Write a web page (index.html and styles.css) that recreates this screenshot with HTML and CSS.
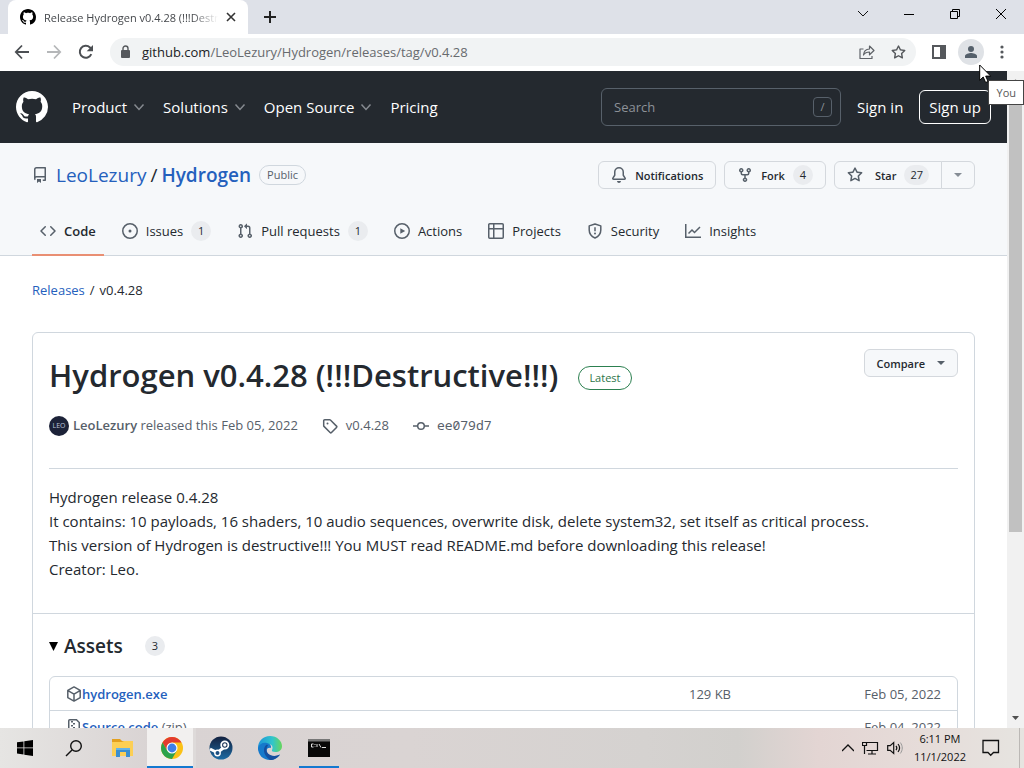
FILE: index.html
```html
<!DOCTYPE html>
<html lang="en">
<head>
    <meta charset="utf-8">
    <title>Release Hydrogen v0.4.28 (!!!Destructive!!!)</title>
    <link rel="stylesheet" href="styles.css">
</head>
<body>
<svg class="sprite" aria-hidden="true">
    <symbol id="mark" viewBox="0 0 16 16"><path d="M8 0C3.58 0 0 3.58 0 8c0 3.54 2.29 6.53 5.47 7.59.4.07.55-.17.55-.38 0-.19-.01-.82-.01-1.49-2.01.37-2.53-.49-2.69-.94-.09-.23-.48-.94-.82-1.13-.28-.15-.68-.52-.01-.53.63-.01 1.08.58 1.23.82.72 1.21 1.87.87 2.33.66.07-.52.28-.87.51-1.07-1.78-.2-3.64-.89-3.64-3.95 0-.87.31-1.59.82-2.15-.08-.2-.36-1.02.08-2.12 0 0 .67-.21 2.2.82.64-.18 1.32-.27 2-.27.68 0 1.36.09 2 .27 1.53-1.04 2.2-.82 2.2-.82.44 1.1.16 1.92.08 2.12.51.56.82 1.27.82 2.15 0 3.07-1.87 3.75-3.65 3.95.29.25.54.73.54 1.48 0 1.07-.01 1.93-.01 2.2 0 .21.15.46.55.38A8.013 8.013 0 0016 8c0-4.42-3.58-8-8-8z"/></symbol>
    <symbol id="chevron" viewBox="0 0 12 12"><path d="M1.500 3.500L6 8.500l4.500-5" fill="none" stroke="currentColor" stroke-width="1.500"/></symbol>
    <symbol id="star" viewBox="0 0 16 16"><path d="M8 .25a.75.75 0 01.673.418l1.882 3.815 4.21.612a.75.75 0 01.416 1.279l-3.046 2.97.719 4.192a.75.75 0 01-1.088.791L8 12.347l-3.766 1.98a.75.75 0 01-1.088-.79l.72-4.194L.818 6.374a.75.75 0 01.416-1.28l4.21-.611L7.327.668A.75.75 0 018 .25zm0 2.445L6.615 5.5a.75.75 0 01-.564.41l-3.097.45 2.24 2.184a.75.75 0 01.216.664l-.528 3.084 2.769-1.456a.75.75 0 01.698 0l2.77 1.456-.53-3.084a.75.75 0 01.216-.664l2.24-2.183-3.096-.45a.75.75 0 01-.564-.41L8 2.694v.001z"/></symbol>
</svg>

<div class="browser">
    <!-- tabs -->
    <div class="tabstrip">
        <div class="tab">
            <svg width="16" height="16"><use href="#mark"/></svg>
            <span class="tab-title">Release Hydrogen v0.4.28 (!!!Destructive!!!)</span>
            <button class="plain" aria-label="Close tab"><svg width="10" height="10" viewBox="0 0 10 10"><path d="M1 1l8 8M9 1L1 9" stroke="#333" stroke-width="1.600"/></svg></button>
        </div>
        <button class="plain newtab" aria-label="New tab"><svg width="12" height="12" viewBox="0 0 12 12"><path d="M6 0v12M0 6h12" stroke="#222" stroke-width="2"/></svg></button>
        <div class="winbuttons">
            <button class="plain" aria-label="Search tabs"><svg width="12" height="12" viewBox="0 0 12 12"><path d="M1 3l5 5 5-5" fill="none" stroke="#111"/></svg></button>
            <button class="plain" aria-label="Minimize"><svg width="12" height="12" viewBox="0 0 12 12"><path d="M1 6.500h10" stroke="#000"/></svg></button>
            <button class="plain" aria-label="Restore"><svg width="12" height="12" viewBox="0 0 12 12"><path d="M1.500 3.500h7v7h-7zM3.500 3.500v-2h7v7h-2" fill="none" stroke="#000"/></svg></button>
            <button class="plain" aria-label="Close"><svg width="12" height="12" viewBox="0 0 12 12"><path d="M1 1l10 10M11 1L1 11" stroke="#000"/></svg></button>
        </div>
    </div>

    <!-- toolbar -->
    <div class="toolbar">
        <button class="plain" aria-label="Back"><svg width="16" height="16" viewBox="0 0 16 16"><path d="M15 8H2M8 1.500L1.800 8 8 14.500" fill="none" stroke="#4c4f53" stroke-width="1.800"/></svg></button>
        <button class="plain" aria-label="Forward"><svg width="16" height="16" viewBox="0 0 16 16"><path d="M1 8h13M8 1.500L14.200 8 8 14.500" fill="none" stroke="#b5b7b9" stroke-width="1.800"/></svg></button>
        <button class="plain" aria-label="Reload"><svg width="16" height="16" viewBox="0 0 16 16"><path d="M13.300 10.200A6 6 0 1112 3.500l1.500 1.600" fill="none" stroke="#4c4f53" stroke-width="2"/><path d="M15 1v6.300H8.700z" fill="#4c4f53"/></svg></button>
        <div class="address">
            <svg width="10" height="14" viewBox="0 0 10 14"><rect x="1" y="5" width="9" height="8" rx="1" fill="#55585c"/><path d="M3 5.500V3.500a2.500 2.500 0 015 0v2" fill="none" stroke="#55585c" stroke-width="1.400"/></svg>
            <span class="url"><b>github.com</b>/LeoLezury/Hydrogen/releases/tag/v0.4.28</span>
            <button class="plain" aria-label="Share"><svg width="16" height="16" viewBox="0 0 16 16"><path d="M4.500 5H1v9.500h12V12M4.500 11c.3-4 2.500-5.800 6-6V2l4.500 4.500-4.500 4.300V8c-3 0-4.600.8-6 3z" fill="none" stroke="#5f6368" stroke-width="1.200" stroke-linejoin="round"/></svg></button>
            <button class="plain" aria-label="Bookmark"><svg width="15" height="15" fill="#55585c"><use href="#star"/></svg></button>
        </div>
        <button class="plain" aria-label="Side panel"><svg width="14" height="14" viewBox="0 0 14 14"><path d="M1 1h12v12H1z" fill="none" stroke="#55585c" stroke-width="2"/><path d="M8 1h5v12H8z" fill="#55585c"/></svg></button>
        <button class="plain profile" aria-label="You"><svg width="14" height="14" viewBox="0 0 14 14" fill="#55606b"><circle cx="7" cy="4" r="3"/><path d="M1 13v-2c0-2 4-3 6-3s6 1 6 3v2z"/></svg></button>
        <button class="plain menu" aria-label="Menu"><svg width="4" height="14" viewBox="0 0 4 14" fill="#55585c"><circle cx="2" cy="2" r="1.600"/><circle cx="2" cy="7" r="1.600"/><circle cx="2" cy="12" r="1.600"/></svg></button>
    </div>

    <!-- page -->
    <div class="viewport">
        <div class="page">
            <header class="gh-header">
                <a href="#" aria-label="Homepage"><svg width="32" height="32" fill="#fff"><use href="#mark"/></svg></a>
                <nav class="gh-nav">
                    <a href="#">Product <svg width="12" height="12"><use href="#chevron"/></svg></a>
                    <a href="#">Solutions <svg width="12" height="12"><use href="#chevron"/></svg></a>
                    <a href="#">Open Source <svg width="12" height="12"><use href="#chevron"/></svg></a>
                    <a href="#">Pricing</a>
                </nav>
                <label class="search">
                    <input type="text" placeholder="Search" aria-label="Search">
                    <kbd>/</kbd>
                </label>
                <a href="#">Sign in</a>
                <a href="#" class="signup">Sign up</a>
            </header>

            <div class="repo-head">
                <div class="repo-row">
                    <svg class="icon" width="16" height="16" viewBox="0 0 16 16"><path d="M4.500.75h8.750v11.500M4.500 9.750h8.750M4.500.75a1.750 1.750 0 00-1.750 1.750v9a1.750 1.750 0 00.500 1.200M2.750 11.500a1.750 1.750 0 011.750-1.750M13.250 9v4.250h-2.500" fill="none" stroke="currentColor" stroke-width="1.500" stroke-linejoin="round"/><path d="M5 12h4v4l-2-1.500L5 16z"/></svg>
                    <div class="repo-name"><a href="#">LeoLezury</a><span>/</span><a href="#"><strong>Hydrogen</strong></a></div>
                    <span class="label">Public</span>
                    <div class="actions">
                        <button class="btn"><svg class="icon" width="16" height="16" viewBox="0 0 16 16"><path d="M8 16a2 2 0 001.985-1.750c.017-.137-.097-.25-.235-.25h-3.500c-.138 0-.252.113-.235.25A2 2 0 008 16z"/><path d="M8 1.500A3.500 3.500 0 004.500 5v2.947c0 .346-.102.683-.294.97l-1.703 2.556.007.027h10.980l.007-.027-1.703-2.556a1.750 1.750 0 01-.294-.97V5A3.500 3.500 0 008 1.500zM3 5a5 5 0 0110 0v2.947c0 .05.015.098.042.139l1.703 2.555A1.518 1.518 0 0113.482 13H2.518a1.518 1.518 0 01-1.263-2.360l1.703-2.554A.25.25 0 003 7.947V5z" fill-rule="evenodd"/></svg>Notifications</button>
                        <button class="btn"><svg class="icon" width="16" height="16" viewBox="0 0 16 16"><path d="M5 3.250a.75.75 0 11-1.500 0 .75.75 0 011.500 0zm0 2.122a2.250 2.250 0 10-1.500 0v.878A2.250 2.250 0 005.750 8.500h1.500v2.128a2.251 2.251 0 101.500 0V8.500h1.500a2.250 2.250 0 002.250-2.250v-.878a2.250 2.250 0 10-1.500 0v.878a.75.75 0 01-.75.75h-4.500A.75.75 0 015 6.250v-.878zm3.750 7.378a.75.75 0 11-1.500 0 .75.75 0 011.500 0zm3-8.750a.75.75 0 100-1.500.75.75 0 000 1.500z" fill-rule="evenodd"/></svg>Fork<span class="counter">4</span></button>
                        <div class="btn-group">
                            <button class="btn"><svg class="icon" width="16" height="16"><use href="#star"/></svg><span class="star-text">Star</span><span class="counter">27</span></button>
                            <button class="btn" aria-label="Add to list"><span class="caret"></span></button>
                        </div>
                    </div>
                </div>
                <nav class="repo-nav">
                    <a href="#" class="selected"><svg class="icon" width="16" height="16" viewBox="0 0 16 16"><path d="M5.250 3.750L1 8l4.250 4.250M10.750 3.750L15 8l-4.250 4.250" fill="none" stroke="currentColor" stroke-width="1.500" stroke-linecap="round" stroke-linejoin="round"/></svg>Code</a>
                    <a href="#"><svg class="icon" width="16" height="16" viewBox="0 0 16 16"><circle cx="8" cy="8" r="7.250" fill="none" stroke="currentColor" stroke-width="1.500"/><circle cx="8" cy="8" r="1.500"/></svg>Issues<span class="counter">1</span></a>
                    <a href="#"><svg class="icon" width="16" height="16" viewBox="0 0 16 16"><path d="M7.177 3.073L9.573.677A.25.25 0 0110 .854v4.792a.25.25 0 01-.427.177L7.177 3.427a.25.25 0 010-.354zM3.750 2.500a.75.75 0 100 1.500.75.75 0 000-1.500zm-2.250.75a2.250 2.250 0 113 2.122v5.256a2.251 2.251 0 11-1.500 0V5.372A2.250 2.250 0 011.500 3.250zM11 2.500h-1V4h1a1 1 0 011 1v5.628a2.251 2.251 0 101.500 0V5A2.500 2.500 0 0011 2.500zm1 10.250a.75.75 0 111.500 0 .75.75 0 01-1.500 0zM3.750 12a.75.75 0 100 1.500.75.75 0 000-1.500z" fill-rule="evenodd"/></svg>Pull requests<span class="counter">1</span></a>
                    <a href="#"><svg class="icon" width="16" height="16" viewBox="0 0 16 16"><circle cx="8" cy="8" r="7.250" fill="none" stroke="currentColor" stroke-width="1.500"/><path d="M6.300 5.200v5.600L11.200 8z"/></svg>Actions</a>
                    <a href="#"><svg class="icon" width="16" height="16" viewBox="0 0 16 16"><path d="M1.750.75h12.500a1 1 0 011 1v12.500a1 1 0 01-1 1H1.750a1 1 0 01-1-1V1.750a1 1 0 011-1zM5.750 1v14M1 5.750h14" fill="none" stroke="currentColor" stroke-width="1.500"/></svg>Projects</a>
                    <a href="#"><svg class="icon" width="16" height="16" viewBox="0 0 16 16"><path d="M8 1l5.800 1.900V7c0 3.700-1.800 6.300-5.800 8-4-1.700-5.800-4.300-5.800-8V2.900z" fill="none" stroke="currentColor" stroke-width="1.500" stroke-linejoin="round"/><path d="M7.250 4.250h1.500v4h-1.500z"/><circle cx="8" cy="10.500" r="1"/></svg>Security</a>
                    <a href="#"><svg class="icon" width="16" height="16" viewBox="0 0 16 16"><path d="M.75 1v13.250H16M3.500 10.500L7 7l2.500 2.500L15 4" fill="none" stroke="currentColor" stroke-width="1.500"/></svg>Insights</a>
                </nav>
            </div>

            <main class="content">
                <nav class="crumbs"><a href="#">Releases</a><span>/</span><span>v0.4.28</span></nav>
                <section class="release">
                    <div class="release-main">
                        <div class="title-row">
                            <h1>Hydrogen v0.4.28 (!!!Destructive!!!)</h1>
                            <span class="label latest">Latest</span>
                            <button class="btn compare">Compare<span class="caret"></span></button>
                        </div>
                        <div class="meta">
                            <span class="author"><span class="avatar">LEO</span><span><strong>LeoLezury</strong> released this Feb 05, 2022</span></span>
                            <span class="meta-item"><svg class="icon" width="16" height="16" viewBox="0 0 16 16"><path d="M1.700 2.700a1 1 0 011-1h5c.3 0 .5.100.7.300l6.100 6.100a1 1 0 010 1.400l-5 5a1 1 0 01-1.400 0L2 8.400a1 1 0 01-.3-.7z" fill="none" stroke="currentColor" stroke-width="1.500"/><circle cx="5.500" cy="5.500" r="1"/></svg>v0.4.28</span>
                            <span class="meta-item"><svg class="icon" width="16" height="16" viewBox="0 0 16 16"><path d="M0 8h4.700M11.300 8H16" stroke="currentColor" stroke-width="1.500"/><circle cx="8" cy="8" r="3.300" fill="none" stroke="currentColor" stroke-width="1.500"/></svg><code>ee079d7</code></span>
                        </div>
                        <p class="notes">Hydrogen release 0.4.28<br>
                            It contains: 10 payloads, 16 shaders, 10 audio sequences, overwrite disk, delete system32, set itself as critical process.<br>
                            This version of Hydrogen is destructive!!! You MUST read README.md before downloading this release!<br>
                            Creator: Leo.</p>
                    </div>
                    <details class="assets" open>
                        <summary><svg width="9" height="9" viewBox="0 0 9 9"><path d="M0 0h9L4.500 9z"/></svg><span class="assets-title">Assets</span><span class="counter">3</span></summary>
                        <ul>
                            <li>
                                <svg class="icon" width="16" height="16" viewBox="0 0 16 16"><path d="M8 .9l6.200 3.500v7.200L8 15.100l-6.200-3.500V4.400zM2 4.600l6 3.500 6-3.500M8 8v7" fill="none" stroke="currentColor" stroke-width="1.500" stroke-linejoin="round"/></svg>
                                <a href="#">hydrogen.exe</a><span class="size">129 KB</span><span class="date">Feb 05, 2022</span>
                            </li>
                            <li>
                                <svg class="icon" width="16" height="16" viewBox="0 0 16 16"><path d="M2.750 1.750a1 1 0 011-1h6.700l2.800 2.800v10.700a1 1 0 01-1 1H3.750a1 1 0 01-1-1z" fill="none" stroke="currentColor" stroke-width="1.500"/><path d="M5 2h2v1.500H5zM7 4h2v1.500H7zM5 6h2v1.500H5zM7 8h2v1.500H7zM5 10h3v3H5z"/></svg>
                                <a href="#">Source code <span class="zip">(zip)</span></a><span class="size"></span><span class="date">Feb 04, 2022</span>
                            </li>
                        </ul>
                    </details>
                </section>
            </main>
        </div>
        <div class="scrollbar">
            <svg width="7" height="4" viewBox="0 0 7 4"><path d="M0 4h7L3.500 0z" fill="#a3a3a3"/></svg>
            <div class="thumb"></div>
            <svg width="7" height="4" viewBox="0 0 7 4"><path d="M0 0h7L3.500 4z" fill="#505050"/></svg>
        </div>
    </div>

    <!-- taskbar -->
    <div class="taskbar">
        <button class="task" aria-label="Start"><svg width="16" height="16" viewBox="0 0 16 16"><path d="M0 2.300l6.500-.9v6.100H0zM7.300 1.300L16 0v7.500H7.300zM0 8.300h6.500v6.200L0 13.600zM7.300 8.300H16V16l-8.700-1.300z"/></svg></button>
        <button class="task" aria-label="Search"><svg width="18" height="18" viewBox="0 0 18 18"><circle cx="11" cy="7" r="5.300" fill="none" stroke="#111" stroke-width="1.400"/><path d="M7 11l-6 6" stroke="#111" stroke-width="1.500"/></svg></button>
        <button class="task" aria-label="File Explorer"><svg width="22" height="20" viewBox="0 0 22 20"><path d="M0 1h8l2 2h10v4H0z" fill="#e3a01f"/><path d="M0 4h10l2-1h9v15H0z" fill="#fccf55"/><path d="M4 10h14v9h-4v-5H8v5H4z" fill="#3b8fd0"/><path d="M4 10h14v2H4z" fill="#64b3e8"/></svg></button>
        <button class="task active" aria-label="Chrome"><svg width="24" height="24" viewBox="0 0 24 24"><circle cx="12" cy="12" r="11" fill="#fbc116"/><path d="M2.500 6.500A11 11 0 0121.530 6.500H12L7.240 14.750z" fill="#e33b2e"/><path d="M2.500 6.500A11 11 0 0012 23l4.760-8.250H7.240z" fill="#2ba24c"/><circle cx="12" cy="12" r="5.500" fill="#fff"/><circle cx="12" cy="12" r="4.400" fill="#3f7fe8"/></svg></button>
        <button class="task" aria-label="Steam"><svg width="24" height="24" viewBox="0 0 24 24"><defs><linearGradient id="steam" x1="0" y1="0" x2="0" y2="1"><stop offset="0" stop-color="#13213f"/><stop offset="1" stop-color="#1c6ba3"/></linearGradient></defs><circle cx="12" cy="12" r="11.500" fill="url(#steam)"/><path d="M.7 13.500L7 16l5.500-4.800L15.500 13 9 18" fill="#fff"/><path d="M1 13l7 3.500" stroke="#fff" stroke-width="3"/><circle cx="8.500" cy="17" r="2.700" fill="#1b4f80" stroke="#fff" stroke-width="1.400"/><circle cx="15.800" cy="9" r="3.600" fill="#173052" stroke="#fff" stroke-width="1.800"/><circle cx="15.800" cy="9" r="1.700" fill="#fff"/></svg></button>
        <button class="task" aria-label="Edge"><svg width="24" height="24" viewBox="0 0 24 24"><defs><linearGradient id="edge" x1="0" y1="0" x2="1" y2="0"><stop offset="0" stop-color="#1d94d8"/><stop offset=".6" stop-color="#30c5cc"/><stop offset="1" stop-color="#67d65b"/></linearGradient></defs><path d="M0 12C0 5 5 0 12 0s12 5 12 10c0 4-3 6-6.500 6-3 0-4-1-3.500-2 1.500-3 0-6-4-6-5 0-8 3-10 7z" fill="url(#edge)"/><path d="M0 12c1-4 5-6 9-5 3 .5 4.500 2.500 4 5-4-1-6 3-3 6 3.500 3 8.500 2.500 12 .5C19.500 22 16 24 12 24 5 24 0 19 0 12z" fill="#1679cb"/><path d="M9 8.500c-4 2-5 10 3 15.500 4 0 8-2 10-5.500-4 2-9 2-12-1-2-2-2-6 0-8z" fill="#154f9f"/></svg></button>
        <button class="task running" aria-label="Command Prompt"><svg width="22" height="18" viewBox="0 0 22 18"><path d="M0 0h22v18H0z" fill="#080808"/><path d="M0 0h22v2.500H0z" fill="#777"/><path d="M5.500 5H3.500v3h2M7 5v1M7 7.500v.500M9 5v3M11 5l2 3.500M14 8.500h4" fill="none" stroke="#ddd"/></svg></button>
        <div class="tray">
            <svg width="12" height="12" viewBox="0 0 12 12"><path d="M0 9l6-6 6 6" fill="none" stroke="#111" stroke-width="1.300"/></svg>
            <svg width="17" height="14" viewBox="0 0 17 14"><path d="M4.500 1.500h11v8h-11M10 10v3M6 13h8M.5 1.500h4v3h-4zM2.500 5v8" fill="none" stroke="#111" stroke-width="1.200"/></svg>
            <svg width="17" height="14" viewBox="0 0 17 14"><path d="M.7 4.700h2.500L6.700 1.500v11L3.200 9.300H.7zM9 4.800c1 1.300 1 3.100 0 4.400M11 3c2 2.500 2 5.500 0 8" fill="none" stroke="#111" stroke-width="1.200"/><path d="M13.300 1.500c2.600 3.500 2.600 7.500 0 11" fill="none" stroke="#999"/></svg>
            <div class="clock"><span>6:11 PM</span><span>11/1/2022</span></div>
            <svg width="18" height="18" viewBox="0 0 18 18"><path d="M1 1.500h15.500v12h-5L8.700 16.300 6 13.500H1z" fill="none" stroke="#111" stroke-width="1.300"/></svg>
        </div>
    </div>

    <div class="tooltip">You</div>
    <svg class="cursor" width="13" height="20" viewBox="0 0 13 20"><path d="M.7 1v15.300l3.500-3.300 2.400 5.500 2.500-1-2.400-5.400h5z" fill="#fff" stroke="#000"/></svg>
</div>
</body>
</html>
```
FILE: styles.css
```css
* {
    box-sizing: border-box;
}

body {
    margin: 0;
    font-family: "Segoe UI", "Open Sans", "Noto Sans", sans-serif;
    font-size: 13px;
    color: #24292f;
    background: #fff;
}

a {
    color: #2460bd;
    text-decoration: none;
}

button, input {
    font-family: inherit;
}

svg {
    display: block;
    flex: none;
}

.sprite {
    position: absolute;
    width: 0;
    height: 0;
}

.browser {
    position: relative;
    display: flex;
    flex-direction: column;
    height: 100vh;
    overflow: hidden;
}

.plain {
    display: flex;
    align-items: center;
    justify-content: center;
    padding: 0;
    border: 0;
    background: none;
}

/* tabs */
.tabstrip {
    display: flex;
    align-items: stretch;
    flex: none;
    height: 34px;
    padding-left: 8px;
    background: #dee1e8;
}

.tab {
    display: flex;
    align-items: center;
    gap: 8px;
    width: 240px;
    padding: 0 12px;
    background: #fff;
    border-radius: 8px 8px 0 0;
}

.tab-title {
    flex: 1;
    overflow: hidden;
    white-space: nowrap;
    font-size: 11px;
    color: #45484c;
    -webkit-mask-image: linear-gradient(to right, #000 85%, transparent);
    mask-image: linear-gradient(to right, #000 85%, transparent);
}

.newtab {
    width: 44px;
}

.winbuttons {
    display: flex;
    margin-left: auto;
}

.winbuttons button {
    width: 46px;
    padding-bottom: 6px;
}

/* toolbar */
.toolbar {
    display: flex;
    align-items: center;
    gap: 16px;
    flex: none;
    height: 36px;
    padding: 0 16px 0 14px;
    background: #fff;
    border-bottom: 1px solid #fff;
    box-sizing: content-box;
}

.address {
    display: flex;
    flex: 1;
    align-items: center;
    gap: 16px;
    height: 28px;
    padding: 0 10px;
    border-radius: 14px;
    background: #f1f3f4;
}

.url {
    flex: 1;
    margin-left: -4px;
    color: #676a6e;
}

.url b {
    font-weight: 400;
    color: #202124;
}

.profile {
    width: 26px;
    height: 26px;
    margin: 0 -4px;
    border-radius: 50%;
    background: #dfe2e6;
}

.menu {
    width: 12px;
}

.viewport {
    display: flex;
    flex: 1;
    min-height: 0;
}

.page {
    flex: 1;
    min-width: 0;
    overflow: hidden;
}

/* site header */
.gh-header {
    display: flex;
    align-items: center;
    gap: 16px;
    height: 72px;
    padding: 0 16px;
    font-size: 15px;
    background: #24292f;
}

.gh-header a {
    color: #fff;
    white-space: nowrap;
}

.gh-nav {
    display: flex;
    flex: 1;
    gap: 18px;
    margin-left: 8px;
}

.gh-nav a {
    display: flex;
    align-items: center;
    gap: 6px;
}

.gh-nav svg {
    color: #868a90;
}

.search {
    display: flex;
    align-items: center;
    width: 240px;
    height: 38px;
    padding: 0 8px 0 12px;
    border: 1px solid #57606a;
    border-radius: 6px;
}

.search input {
    flex: 1;
    min-width: 0;
    padding: 0;
    border: 0;
    outline: 0;
    font-size: 13px;
    color: #fff;
    background: none;
}

.search input::placeholder {
    color: #8c9198;
    opacity: 1;
}

.search kbd {
    width: 19px;
    height: 20px;
    border: 1px solid #57606a;
    border-radius: 4px;
    font-family: inherit;
    font-size: 11px;
    line-height: 18px;
    text-align: center;
    color: #8c9198;
}

.signup {
    padding: 0 9px;
    border: 1px solid #fff;
    border-radius: 6px;
    line-height: 32px;
}

/* repository header */
.icon {
    color: #57606a;
    fill: #57606a;
}

.repo-head {
    padding: 18px 32px 0;
    border-bottom: 1px solid #d0d7de;
    background: #f6f8fa;
}

.repo-row {
    display: flex;
    align-items: center;
    gap: 8px;
    height: 28px;
    margin-bottom: 18px;
}

.repo-name {
    display: flex;
    gap: 4px;
    font-size: 19px;
}

.repo-name strong {
    font-weight: 600;
}

.label {
    padding: 0 7px;
    border: 1px solid #d0d7de;
    border-radius: 20px;
    font-size: 11px;
    font-weight: 500;
    line-height: 18px;
    color: #57606a;
}

.actions {
    display: flex;
    gap: 8px;
    margin-left: auto;
}

.btn {
    display: flex;
    align-items: center;
    gap: 8px;
    height: 28px;
    padding: 0 12px;
    border: 1px solid #d4d8dd;
    border-radius: 6px;
    font-size: 11px;
    font-weight: 600;
    color: #24292f;
    background: #f6f8fa;
}

.btn-group {
    display: flex;
}

.btn-group .btn:first-child {
    border-radius: 6px 0 0 6px;
}

.btn-group .btn:last-child {
    margin-left: -1px;
    border-radius: 0 6px 6px 0;
}

.btn-group .caret {
    border-top-color: #868d95;
}

.star-text {
    margin-left: 4px;
}

.counter {
    min-width: 20px;
    padding: 0 6px;
    border-radius: 20px;
    font-size: 11px;
    font-weight: 500;
    line-height: 20px;
    text-align: center;
    color: #24292f;
    background: #eaecef;
}

.caret {
    border: 4px solid transparent;
    border-top-color: #57606a;
    border-bottom: 0;
}

.repo-nav {
    display: flex;
    gap: 10px;
}

.repo-nav a {
    display: flex;
    align-items: center;
    gap: 8px;
    height: 49px;
    padding: 0 8px;
    margin-bottom: -1px;
    border-bottom: 2px solid transparent;
    color: #24292f;
    white-space: nowrap;
}

.repo-nav .selected {
    border-bottom-color: #e98f73;
    font-weight: 600;
}

/* release */
.content {
    padding: 22px 32px;
}

.crumbs {
    display: flex;
    gap: 5px;
    margin-bottom: 30px;
    line-height: 24px;
}

.release {
    border: 1px solid #d0d7de;
    border-radius: 6px;
}

.release-main {
    padding: 16px 16px 32px;
}

.title-row {
    display: flex;
    align-items: flex-start;
}

h1 {
    margin: 0;
    font-size: 31px;
    font-weight: 600;
    line-height: 52px;
}

.latest {
    margin: 17px 0 0 20px;
    padding: 0 10px;
    border-color: #2c8050;
    line-height: 22px;
    color: #2c7548;
}

.compare {
    gap: 12px;
    margin-left: auto;
}

.meta {
    display: flex;
    align-items: center;
    gap: 24px;
    margin-bottom: 16px;
    padding: 12px 0 30px;
    border-bottom: 1px solid #d0d7de;
    line-height: 25px;
    color: #57606a;
}

.author, .meta-item {
    display: flex;
    align-items: center;
}

.author {
    gap: 4px;
}

.author strong {
    font-weight: 600;
}

.avatar {
    width: 20px;
    height: 20px;
    border-radius: 50%;
    font-size: 7px;
    line-height: 20px;
    text-align: center;
    color: #bcc4d8;
    background: #1c2238;
}

.meta-item {
    gap: 8px;
}

.meta code {
    font-family: "Noto Sans Mono", "DejaVu Sans Mono", monospace;
    font-size: 13px;
}

.notes {
    margin: 0;
    font-size: 15px;
    line-height: 24px;
}

.assets {
    padding: 16px;
    border-top: 1px solid #d0d7de;
}

.assets summary {
    display: flex;
    align-items: center;
    gap: 6px;
    margin-bottom: 14px;
    line-height: 32px;
    list-style: none;
}

.assets-title {
    margin-right: 16px;
    font-size: 19px;
    font-weight: 600;
}

.assets .counter {
    font-weight: 400;
}

.assets ul {
    margin: 0;
    padding: 0;
    border: 1px solid #d0d7de;
    border-radius: 6px;
    list-style: none;
}

.assets li {
    display: flex;
    align-items: center;
    height: 33px;
    padding: 0 16px;
    color: #57606a;
}

.assets li + li {
    border-top: 1px solid #d0d7de;
}

.assets li a {
    flex: 1;
    font-weight: 600;
}

.zip {
    font-weight: 400;
    color: #57606a;
}

.date {
    width: 210px;
    text-align: right;
}

.scrollbar {
    display: flex;
    flex-direction: column;
    align-items: center;
    justify-content: space-between;
    width: 17px;
    padding: 8px 0;
    background: #f1f1f1;
}

.thumb {
    width: 13px;
    height: 70%;
    margin-bottom: auto;
    background: #c1c1c1;
}

/* taskbar */
.taskbar {
    display: flex;
    flex: none;
    height: 40px;
    background: linear-gradient(to right, #e6e5e3, #d9d3d3 15%, #dad4d3 40%, #d5d2d0 63%, #d2d0cd 72%, #e3d5d3 80%, #e6dcd9 90%, #e6e4e0);
}

.task {
    display: flex;
    align-items: center;
    justify-content: center;
    width: 49px;
    padding: 0;
    border: 0;
    background: none;
}

.task.active {
    background: linear-gradient(#1479d0, #1479d0) bottom / 100% 2px no-repeat, #f2f0ef;
    box-shadow: inset -3px 0 #dedad9;
}

.task.running {
    background: linear-gradient(#1479d0, #1479d0) center bottom / 40px 2px no-repeat;
}

.tray {
    display: flex;
    align-items: center;
    gap: 8px;
    margin: 0 4px 0 auto;
    padding-right: 19px;
    border-right: 1px solid #bbb8b5;
}

.clock {
    display: flex;
    flex-direction: column;
    margin: 0 8px 0 2px;
    font-size: 11px;
    line-height: 18px;
    text-align: center;
    color: #111;
}

/* pointer and its tooltip */
.tooltip {
    position: absolute;
    top: 80px;
    right: 0;
    padding: 0 7px;
    border: 1px solid #444;
    font-size: 11px;
    line-height: 23px;
    color: #575757;
    background: #fff;
}

.cursor {
    position: absolute;
    top: 64px;
    right: 32px;
}
```
